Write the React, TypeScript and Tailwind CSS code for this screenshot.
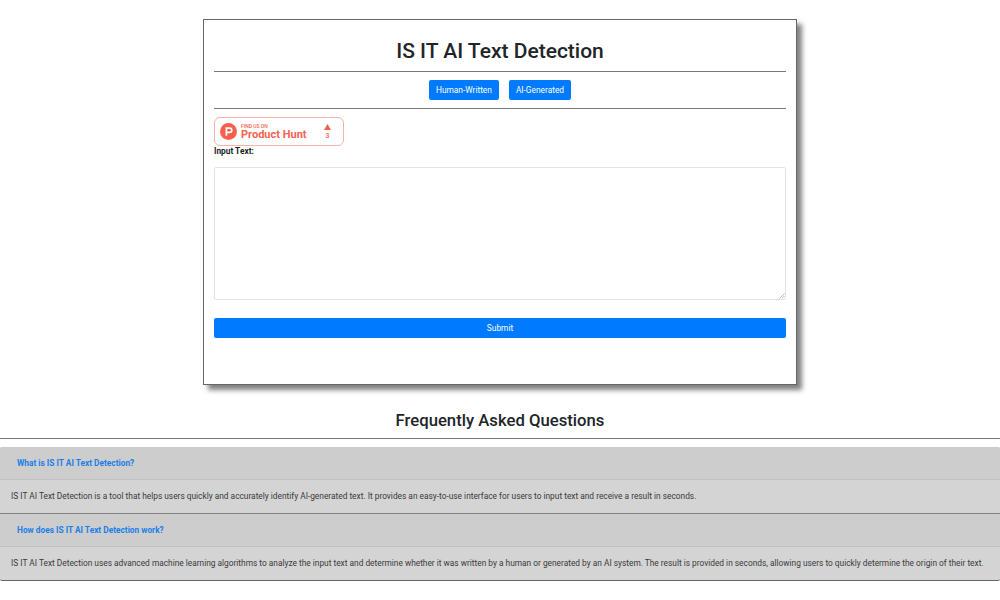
import React from "react";

function Badge() {
  return (
    <div className="flex h-[29px] w-[130px] items-center rounded-[6px] border border-[#f7b3a8] bg-white pl-[5px]">
      <svg width="17" height="17" viewBox="0 0 40 40" className="shrink-0">
        <circle cx="20" cy="20" r="20" fill="#f6614f" />
        <path d="M22.7 20H17v-6h5.7a3 3 0 0 1 0 6zm0-10H13v20h4v-6h5.7a7 7 0 0 0 0-14z" fill="#fff" />
      </svg>
      <div className="ml-[4px] flex w-[72px] flex-col whitespace-nowrap pt-[2px]">
        <span className="text-[5px] leading-[5px] font-medium text-[#f6614f]">FIND US ON</span>
        <span className="text-[11px] leading-[12px] font-bold text-[#f6614f]">Product Hunt</span>
      </div>
      <div className="ml-[11px] flex flex-col items-center">
        <svg width="7" height="6" viewBox="0 0 7 6"><path d="M3.5 0L7 6H0z" fill="#f6614f" /></svg>
        <span className="mt-[2px] text-[7px] leading-[8px] font-medium text-[#f6614f]">3</span>
      </div>
    </div>
  );
}

export default function App() {
  return (
    <div className="min-h-[600px] bg-white font-['Roboto',sans-serif] text-[#212529]">
      <div className="pt-[19px]">
        <div className="mx-auto h-[366px] w-[594px] border border-[#666] bg-white px-[10px] pt-[10px] shadow-[5px_5px_5px_#808080]">
          <h1 className="flex h-[41px] items-center justify-center pt-[2px] text-[21px] font-medium">IS IT AI Text Detection</h1>
          <div className="h-px bg-[#777]" />
          <div className="flex h-[36px] items-center justify-center gap-[10px]">
            <button className="h-[20px] rounded-[2px] bg-[#007bff] px-[7px] text-[8.33px] text-white">Human-Written</button>
            <button className="h-[20px] rounded-[2px] bg-[#007bff] px-[7px] text-[8.33px] text-white">AI-Generated</button>
          </div>
          <div className="h-px bg-[#777]" />
          <div className="pt-[8px]">
            <Badge />
          </div>
          <div className="text-[8.33px] leading-[10px] font-bold">Input Text:</div>
          <div className="relative mt-[11px]">
            <textarea className="block h-[133px] w-full resize-none rounded-[2px] border border-[#e3e3e3] bg-white" />
            <svg width="6" height="6" viewBox="0 0 6 6" className="pointer-events-none absolute right-[1px] bottom-[1px]">
              <path d="M0.5 5.5L5.5 0.5M3 5.5L5.5 3" stroke="#9a9a9a" strokeWidth="0.7" fill="none" />
            </svg>
          </div>
          <button className="mt-[18px] block h-[20px] w-full rounded-[2px] bg-[#007bff] text-[8.33px] text-white">Submit</button>
        </div>
      </div>
      <h2 className="mt-[26px] text-center text-[16.7px] leading-[20px] font-medium">Frequently Asked Questions</h2>
      <div className="mt-[7px] h-px bg-[#777]" />
      <div className="mt-[8px] overflow-hidden rounded-[2px] border-b border-[#666] bg-[#d4d4d4]">
        <div className="flex h-[33px] items-center border-b border-[#c2c2c2] bg-[#cdcdcd] pl-[17px] pt-px text-[8.33px] font-bold text-[#1a7fe8]">What is IS IT AI Text Detection?</div>
        <div className="flex h-[34px] items-center border-b border-[#808080] pl-[11px] text-[8.33px] text-[#3a3a3a]">IS IT AI Text Detection is a tool that helps users quickly and accurately identify AI-generated text. It provides an easy-to-use interface for users to input text and receive a result in seconds.</div>
        <div className="flex h-[33px] items-center border-b border-[#c2c2c2] bg-[#cdcdcd] pl-[17px] text-[8.33px] font-bold text-[#1a7fe8]">How does IS IT AI Text Detection work?</div>
        <div className="flex h-[33px] items-center whitespace-nowrap pl-[11px] text-[8.33px] text-[#3a3a3a]">IS IT AI Text Detection uses advanced machine learning algorithms to analyze the input text and determine whether it was written by a human or generated by an AI system. The result is provided in seconds, allowing users to quickly determine the origin of their text.</div>
      </div>
    </div>
  );
}
